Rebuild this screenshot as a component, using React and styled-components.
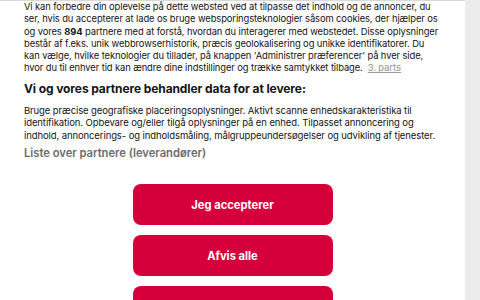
import React from "react";
import styled, { createGlobalStyle } from "styled-components";

const GlobalStyle = createGlobalStyle`
    html, body {
        margin: 0;
        padding: 0;
        background: #ececec;
        overflow: hidden;
    }
    body {
        font-family: Inter, "Noto Sans", sans-serif;
        color: #141414;
    }
`;

const Page = styled.div`
    display: flex;
    width: 480px;
    height: 300px;
    background: #ececec;
`;

const Panel = styled.div`
    width: 465px;
    height: 300px;
    background: #fff;
    border-top: 1px solid #d8d8d8;
    box-sizing: border-box;
    padding: 0 24px;
    overflow: hidden;
`;

const Copy = styled.p`
    margin: 0;
    font-size: ${(p) => p.$size || "9.4px"};
    line-height: ${(p) => p.$lh || "12.3px"};
    letter-spacing: -0.1px;
    white-space: nowrap;
`;

const LinkText = styled.a`
    color: #a0a0a0;
    text-decoration: underline;
    margin-left: 5px;
    font-weight: 500;
`;

const Heading = styled.h2`
    margin: 6px 0 9px;
    font-size: 12px;
    font-weight: 700;
    line-height: 15px;
    letter-spacing: -0.1px;
`;

const PartnerLink = styled.div`
    margin-top: 4px;
    font-size: 11.2px;
    font-weight: 600;
    color: #6b6b6b;
    line-height: 14px;
`;

const Buttons = styled.div`
    display: flex;
    flex-direction: column;
    align-items: center;
    gap: 10px;
    margin-top: 24px;
`;

const Button = styled.button`
    width: 200px;
    height: 41px;
    border: none;
    border-radius: 8px;
    background: #d5003b;
    color: #fff;
    font-family: Inter, "Noto Sans", sans-serif;
    font-size: 11.2px;
    font-weight: 700;
    cursor: pointer;
`;

export default function App() {
    return (
        <>
            <GlobalStyle />
            <Page>
                <Panel>
                    <Copy>
                        Vi kan forbedre din oplevelse på dette websted ved at tilpasse det indhold og de annoncer, du<br />
                        ser, hvis du accepterer at lade os bruge websporingsteknologier såsom cookies, der hjælper os<br />
                        og vores <b>894</b> partnere med at forstå, hvordan du interagerer med webstedet. Disse oplysninger<br />
                        består af f.eks. unik webbrowserhistorik, præcis geolokalisering og unikke identifikatorer. Du<br />
                        kan vælge, hvilke teknologier du tillader, på knappen 'Administrer præferencer' på hver side,<br />
                        hvor du til enhver tid kan ændre dine indstillinger og trække samtykket tilbage.
                        <LinkText>3. parts</LinkText>
                    </Copy>
                    <Heading>Vi og vores partnere behandler data for at levere:</Heading>
                    <Copy $lh="12.5px" $size="9.5px">
                        Bruge præcise geografiske placeringsoplysninger. Aktivt scanne enhedskarakteristika til<br />
                        identifikation. Opbevare og/eller tilgå oplysninger på en enhed. Tilpasset annoncering og<br />
                        indhold, annoncerings- og indholdsmåling, målgruppeundersøgelser og udvikling af tjenester.
                    </Copy>
                    <PartnerLink>Liste over partnere (leverandører)</PartnerLink>
                    <Buttons>
                        <Button>Jeg accepterer</Button>
                        <Button>Afvis alle</Button>
                        <Button>Administrer præferencer</Button>
                    </Buttons>
                </Panel>
            </Page>
        </>
    );
}
